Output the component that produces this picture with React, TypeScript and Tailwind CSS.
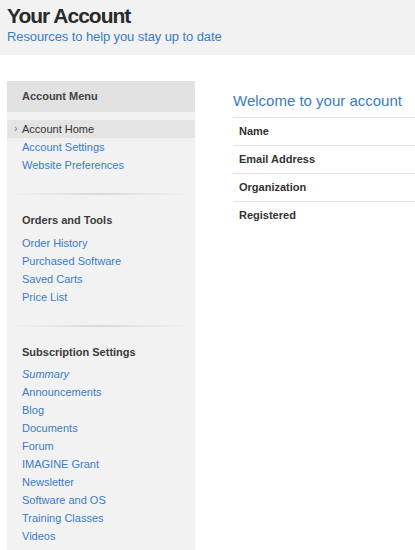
import React from "react";

const Sep = () => (
  <div className="mx-[3px] h-[2px] bg-gradient-to-r from-transparent via-[#dadada] to-transparent" />
);

const Link = ({ children, italic }: { children: React.ReactNode; italic?: boolean }) => (
  <div className={`h-[18px] flex items-center pl-[15px] text-[11px] text-[#3a7cc6] ${italic ? "italic" : ""}`}>
    {children}
  </div>
);

const Heading = ({ children, mb }: { children: React.ReactNode; mb: string }) => (
  <div className={`h-[18px] flex items-center pl-[15px] text-[11px] font-bold text-[#3b3b3b] ${mb}`}>
    {children}
  </div>
);

export default function App() {
  return (
    <div className="w-[415px] h-[550px] overflow-hidden bg-white" style={{ fontFamily: '"Liberation Sans", Arial, sans-serif' }}>
      <div className="bg-[#f2f2f2] h-[55px] pl-[7px] pt-[4px]">
        <div className="text-[21px] leading-[24px] font-bold text-[#2a2a2a] tracking-[-1px]">Your Account</div>
        <div className="text-[13px] leading-[16px] text-[#3a7cc6] mt-[1px] tracking-[-0.1px]">Resources to help you stay up to date</div>
      </div>
      <div className="flex mt-[26px]">
        <div className="ml-[7px] w-[188px] h-[470px] bg-[#f2f2f2] shrink-0">
          <div className="h-[31px] bg-[#e2e2e2] flex items-center pl-[15px] text-[11px] font-bold text-[#444]">Account Menu</div>
          <div className="pt-[8px]">
            <div className="h-[18px] flex items-center bg-[#e4e4e4] text-[11px] text-[#333] relative">
              <span className="absolute left-[7px] top-[1px] text-[10px] text-[#3a7cc6]">›</span>
              <span className="pl-[15px]">Account Home</span>
            </div>
            <Link>Account Settings</Link>
            <Link>Website Preferences</Link>
          </div>
          <div className="h-[19px]" />
          <Sep />
          <div className="h-[16px]" />
          <Heading mb="mb-[5px]">Orders and Tools</Heading>
          <Link>Order History</Link>
          <Link>Purchased Software</Link>
          <Link>Saved Carts</Link>
          <Link>Price List</Link>
          <div className="h-[19px]" />
          <Sep />
          <div className="h-[16px]" />
          <Heading mb="mb-[4px]">Subscription Settings</Heading>
          <Link italic>Summary</Link>
          <Link>Announcements</Link>
          <Link>Blog</Link>
          <Link>Documents</Link>
          <Link>Forum</Link>
          <Link>IMAGINE Grant</Link>
          <Link>Newsletter</Link>
          <Link>Software and OS</Link>
          <Link>Training Classes</Link>
          <Link>Videos</Link>
        </div>
        <div className="ml-[38px] flex-1">
          <div className="h-[36px] flex items-center pt-[4px] text-[15px] text-[#3a7cc6]">Welcome to your account</div>
          {["Name", "Email Address", "Organization", "Registered"].map((l) => (
            <div key={l} className="h-[28px] flex items-center pl-[6px] text-[11px] font-bold text-[#333] border-t border-[#e3e3e3]">
              {l}
            </div>
          ))}
        </div>
      </div>
    </div>
  );
}
